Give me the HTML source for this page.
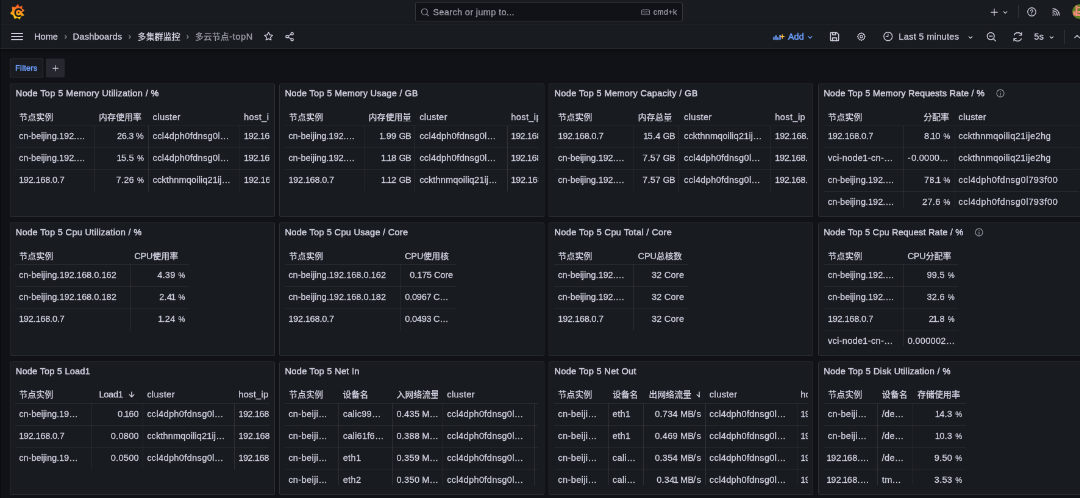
<!DOCTYPE html>
<html lang="zh"><head><meta charset="utf-8"><title>多云节点-topN - Dashboards - Grafana</title>
<style>
html,body{margin:0;padding:0;background:#111217;overflow:hidden}
body{width:1080px;height:498px;position:relative}
#root{position:absolute;left:0;top:0;width:1780px;height:820px;transform:scale(0.6096);transform-origin:0 0;
 font-family:'Liberation Sans','Noto Sans CJK SC',sans-serif;font-size:14.6px;color:rgb(204,204,220);overflow:hidden;will-change:transform}
.bar{position:absolute;left:0;width:1780px;height:39px;background:#181b1f;border-bottom:1px solid rgba(204,204,220,0.12);display:block}
.t{position:absolute;white-space:nowrap;line-height:20px;height:20px;-webkit-text-stroke:0.38px currentColor}
.c{letter-spacing:0;font-weight:500;-webkit-text-stroke:0.2px currentColor}
.ic{position:absolute;overflow:visible}
.ln{position:absolute;background:rgba(204,204,220,0.12)}
.vdiv{position:absolute;width:1px;background:rgba(204,204,220,0.16)}
.search{position:absolute;background:#111217;border:1px solid rgba(204,204,220,0.2);border-radius:3px}
.flt{position:absolute;background:#181b1f;border:1px solid rgba(204,204,220,0.16);border-radius:3px}
.plusb{position:absolute;background:rgba(204,204,220,0.12);border-radius:3px}
.panel{position:absolute;display:block;width:432.4px;height:217.2px;background:#181b1f;border:1px solid rgba(204,204,220,0.12);border-radius:3px}
.clip{position:absolute;overflow:hidden}
</style></head>
<body><div id="root">
<header class="bar" style="top:0"></header><nav class="bar" style="top:40px;border-bottom-color:rgba(204,204,220,0.07);box-shadow:0 3px 6px rgba(0,0,0,0.35)"></nav>
<svg class="ic" style="left:16.50px;top:7.05px" width="23.38" height="24.61" viewBox="0 0 100 100" preserveAspectRatio="none">
<defs><linearGradient id="gg" x1="0.35" y1="1" x2="0.5" y2="0"><stop offset="0" stop-color="#fcd20a"/><stop offset="0.5" stop-color="#f7941e"/><stop offset="1" stop-color="#ef4e28"/></linearGradient></defs>
<path fill="url(#gg)" stroke="url(#gg)" stroke-width="2" stroke-linejoin="round" d="M52.5 -1.0 L63.1 17.4 L83.0 11.0 L81.1 31.9 L100.0 39.0 L79.9 54.5 L97.0 73.0 L74.8 79.4 L66.0 100.0 L48.2 89.0 L30.0 97.0 L20.9 74.8 L-1.0 61.0 L14.4 41.8 L11.0 17.0 L35.7 17.9 Z"/>
<path fill="none" stroke="#181b1f" stroke-width="11.500" stroke-linecap="round" d="M76.4 39.8 A24.5 24.5 0 1 0 71.7 75.6"/>
<circle cx="57.6" cy="55.5" r="5" fill="#181b1f"/>
</svg>
<div class="search" style="left:681.27px;top:3.61px;width:436.32px;height:29.66px"></div>
<svg class="ic" style="left:689.18px;top:11.52px" width="16" height="16" viewBox="0 0 24 24" fill="none" stroke="rgba(204,204,220,0.65)" stroke-width="2" stroke-linecap="round" stroke-linejoin="round" ><circle cx="11" cy="11" r="7.5"/><path d="M16.500 16.500L21 21"/></svg>
<svg class="ic" style="left:1051.06px;top:11.52px" width="16" height="16" viewBox="0 0 24 24" fill="none" stroke="rgba(204,204,220,0.65)" stroke-width="1.8" stroke-linecap="round" stroke-linejoin="round" ><rect x="2.500" y="6" width="19" height="12" rx="2"/><path d="M6 10h1M10 10h1M14 10h1M18 10h.5M7 14h10" stroke-width="1.600"/></svg>
<svg class="ic" style="left:1622.23px;top:10.52px" width="18" height="18" viewBox="0 0 24 24" fill="none" stroke="rgb(204,204,220)" stroke-width="1.7" stroke-linecap="round" stroke-linejoin="round" ><path d="M12 5v14M5 12h14"/></svg>
<svg class="ic" style="left:1641.95px;top:13.01px" width="14" height="14" viewBox="0 0 24 24" fill="none" stroke="rgb(204,204,220)" stroke-width="2.2" stroke-linecap="round" stroke-linejoin="round" ><path d="M7 10l5 5 5-5"/></svg>
<div class="vdiv" style="left:1670.10px;top:7.55px;height:22.31px"></div>
<svg class="ic" style="left:1683.92px;top:11.02px" width="17" height="17" viewBox="0 0 24 24" fill="none" stroke="rgb(204,204,220)" stroke-width="1.9" stroke-linecap="round" stroke-linejoin="round" ><circle cx="12" cy="12" r="9.500"/><path d="M9.500 9.500a2.600 2.600 0 1 1 3.600 2.400c-.8.4-1.100.9-1.100 1.800M12 17v.3"/></svg>
<svg class="ic" style="left:1723.63px;top:11.52px" width="16" height="16" viewBox="0 0 24 24" fill="none" stroke="rgb(204,204,220)" stroke-width="2.3" stroke-linecap="round" stroke-linejoin="round" ><path d="M4.500 13.500a6 6 0 0 1 6 6M4.500 8.500a11 11 0 0 1 11 11M4.500 3.500a16 16 0 0 1 16 16" /><circle cx="5.200" cy="19" r="1.700" fill="rgb(204,204,220)" stroke="none"/></svg>
<svg class="ic" style="left:1758.53px;top:7.38px" width="23.95" height="23.95" viewBox="0 0 24 24">
<defs><clipPath id="av"><circle cx="12" cy="12" r="12"/></clipPath></defs>
<g clip-path="url(#av)"><rect width="24" height="24" fill="#5f7d22"/><rect x="1.500" y="11.500" width="4" height="7" fill="#f28b7d"/><rect x="5.500" y="2" width="3" height="17" fill="#f28b7d"/><rect x="8.500" y="4" width="6" height="2.500" fill="#f28b7d"/><rect x="8.500" y="11" width="6" height="3" fill="#f28b7d"/><rect x="5.500" y="16" width="9" height="3" fill="#f28b7d"/></g></svg>
<div style="position:absolute;left:18.21px;top:53.79px;width:19.52px;height:2px;border-radius:1px;background:rgb(204,204,220)"></div>
<div style="position:absolute;left:18.21px;top:58.96px;width:19.52px;height:2px;border-radius:1px;background:rgb(204,204,220)"></div>
<div style="position:absolute;left:18.21px;top:64.21px;width:19.52px;height:2px;border-radius:1px;background:rgb(204,204,220)"></div>
<svg class="ic" style="left:100.62px;top:53.70px" width="13" height="13" viewBox="0 0 24 24" fill="none" stroke="rgba(204,204,220,0.65)" stroke-width="2.2" stroke-linecap="round" stroke-linejoin="round" ><path d="M10 7l5 5-5 5"/></svg>
<svg class="ic" style="left:205.93px;top:53.70px" width="13" height="13" viewBox="0 0 24 24" fill="none" stroke="rgba(204,204,220,0.65)" stroke-width="2.2" stroke-linecap="round" stroke-linejoin="round" ><path d="M10 7l5 5-5 5"/></svg>
<svg class="ic" style="left:301.24px;top:53.70px" width="13" height="13" viewBox="0 0 24 24" fill="none" stroke="rgba(204,204,220,0.65)" stroke-width="2.2" stroke-linecap="round" stroke-linejoin="round" ><path d="M10 7l5 5-5 5"/></svg>
<svg class="ic" style="left:431.28px;top:50.05px" width="19" height="19" viewBox="0 0 24 24" fill="none" stroke="rgb(204,204,220)" stroke-width="2" stroke-linecap="round" stroke-linejoin="round" ><path d="M12 3.600l2.600 5.400 5.900.8-4.300 4.100 1.050 5.900L12 17l-5.250 2.800 1.050-5.900-4.300-4.100 5.900-.8z"/></svg>
<svg class="ic" style="left:465.74px;top:50.88px" width="18" height="18" viewBox="0 0 24 24" fill="none" stroke="rgb(204,204,220)" stroke-width="2" stroke-linecap="round" stroke-linejoin="round" ><circle cx="17.500" cy="5.500" r="2.600"/><circle cx="6.500" cy="12" r="2.600"/><circle cx="17.500" cy="18.500" r="2.600"/><path d="M8.800 10.700l6.400-3.800M8.800 13.300l6.400 3.800"/></svg>
<svg class="ic" style="left:1266.74px;top:50.04px" width="20" height="20" viewBox="0 0 24 24" fill="none" stroke="#6e9fff" stroke-width="2.6" stroke-linecap="round" stroke-linejoin="round" ><path d="M3 18.500v-6M7 18.500v-9M11 18.500v-5M15 18.500V8.500" stroke-width="2.800" stroke-linecap="butt"/><path d="M19.500 8.500v7M16 12h7" stroke="#f5b73d" stroke-width="2.200"/></svg>
<svg class="ic" style="left:1322.40px;top:53.53px" width="14" height="14" viewBox="0 0 24 24" fill="none" stroke="#6e9fff" stroke-width="2.4" stroke-linecap="round" stroke-linejoin="round" ><path d="M7 10l5 5 5-5"/></svg>
<svg class="ic" style="left:1358.77px;top:50.04px" width="20" height="20" viewBox="0 0 24 24" fill="none" stroke="rgb(204,204,220)" stroke-width="2" stroke-linecap="round" stroke-linejoin="round" ><path d="M4 5.500A1.500 1.500 0 0 1 5.500 4H16l4 4v10.500a1.500 1.500 0 0 1-1.500 1.500h-13A1.500 1.500 0 0 1 4 18.500z"/><path d="M8 4v4.500h6V4M8 20v-5.500h8V20"/></svg>
<svg class="ic" style="left:1404.89px;top:52.04px" width="16" height="16" viewBox="0 0 24 24" fill="none" stroke="rgb(204,204,220)" stroke-width="1.9" stroke-linecap="round" stroke-linejoin="round" ><circle cx="12" cy="12" r="3.200"/><path d="M12 2.800l1.700 2.300 2.800-.7.900 2.700 2.800.9-.7 2.800 2.300 1.700-2.300 1.700.7 2.800-2.800.9-.9 2.700-2.800-.7-1.700 2.300-1.700-2.300-2.800.7-.9-2.700-2.800-.9.700-2.800L2.200 12.500l2.300-1.700-.7-2.800 2.800-.9.900-2.700 2.800.7z" transform="translate(-0.200,-0.300)"/></svg>
<svg class="ic" style="left:1447.94px;top:51.29px" width="17.5" height="17.5" viewBox="0 0 24 24" fill="none" stroke="rgb(204,204,220)" stroke-width="2" stroke-linecap="round" stroke-linejoin="round" ><circle cx="12" cy="12" r="9.500"/><path d="M12 6.500V12H7.500"/></svg>
<svg class="ic" style="left:1584.86px;top:53.53px" width="14" height="14" viewBox="0 0 24 24" fill="none" stroke="rgb(204,204,220)" stroke-width="2.2" stroke-linecap="round" stroke-linejoin="round" ><path d="M7 10l5 5 5-5"/></svg>
<svg class="ic" style="left:1617.31px;top:51.04px" width="18" height="18" viewBox="0 0 24 24" fill="none" stroke="rgb(204,204,220)" stroke-width="2" stroke-linecap="round" stroke-linejoin="round" ><circle cx="11" cy="11" r="7.800"/><path d="M17 17l4.500 4.500M7.500 11h7"/></svg>
<svg class="ic" style="left:1660.45px;top:50.54px" width="19" height="19" viewBox="0 0 24 24" fill="none" stroke="rgb(204,204,220)" stroke-width="2" stroke-linecap="round" stroke-linejoin="round" ><path d="M20 8.500A8.500 8.500 0 0 0 4.600 8M20 3.500v5h-5M4 15.500A8.500 8.500 0 0 0 19.400 16M4 20.500v-5h5"/></svg>
<svg class="ic" style="left:1718.07px;top:53.53px" width="14" height="14" viewBox="0 0 24 24" fill="none" stroke="rgb(204,204,220)" stroke-width="2.2" stroke-linecap="round" stroke-linejoin="round" ><path d="M7 10l5 5 5-5"/></svg>
<div class="vdiv" style="left:1745.89px;top:48.88px;height:22.64px"></div>
<svg class="ic" style="left:1758.73px;top:51.71px" width="16" height="16" viewBox="0 0 24 24" fill="none" stroke="rgb(204,204,220)" stroke-width="2.4" stroke-linecap="round" stroke-linejoin="round" ><path d="M6 15l6-6 6 6"/></svg>
<div class="flt" style="left:16.24px;top:95.64px;width:52.30px;height:29.82px"></div>
<div class="plusb" style="left:74.80px;top:95.64px;width:31.66px;height:31.82px"></div>
<svg class="ic" style="left:82.63px;top:103.55px" width="16" height="16" viewBox="0 0 24 24" fill="none" stroke="rgb(204,204,220)" stroke-width="1.9" stroke-linecap="round" stroke-linejoin="round" ><path d="M12 5.500v13M5.500 12h13"/></svg>
<span class="t" style="top:49.96px;left:56.10px;letter-spacing:-0.015px;">Home</span>
<span class="t" style="top:49.96px;left:119.59px;letter-spacing:0.201px;">Dashboards</span>
<span class="t" style="top:49.96px;left:225.72px;"><span class="c" style="font-size:14.00px">多集群监控</span></span>
<span class="t" style="top:49.96px;left:319.88px;letter-spacing:0.691px;color:rgba(204,204,220,0.65);"><span class="c" style="font-size:14.00px">多云节点</span>-topN</span>
<span class="t" style="top:9.52px;left:710.30px;letter-spacing:0.315px;color:rgba(204,204,220,0.65);">Search or jump to...</span>
<span class="t" style="top:9.52px;left:1071.69px;letter-spacing:0.360px;font-size:12.5px;color:rgba(204,204,220,0.65);">cmd+k</span>
<span class="t" style="top:49.96px;left:1292.81px;letter-spacing:0.038px;color:#6e9fff;-webkit-text-stroke:0.6px currentColor;">Add</span>
<span class="t" style="top:49.96px;left:1474.25px;letter-spacing:0.297px;">Last 5 minutes</span>
<span class="t" style="top:49.96px;left:1696.19px;letter-spacing:0.409px;">5s</span>
<span class="t" style="top:101.55px;left:25.10px;letter-spacing:0.279px;font-size:12.6px;color:#6e9fff;-webkit-text-stroke:0.55px currentColor;">Filters</span>
<main>
<section class="panel" style="left:16.40px;top:136.73px"><span class="t" style="top:5.01px;left:8.37px;letter-spacing:0.347px;-webkit-text-stroke:0.6px currentColor;">Node Top 5 Memory Utilization / %</span><div class="clip" style="left:7.30px;top:-1px;width:416.90px;height:203.25px"><div class="ln" style="left:0.00px;top:68.81px;width:656.17px;height:1px"></div><div class="ln" style="left:0.00px;top:104.81px;width:656.17px;height:1px"></div><div class="ln" style="left:0.00px;top:140.81px;width:656.17px;height:1px"></div><div class="ln" style="left:129.32px;top:69.31px;width:1px;height:108.00px"></div><div class="ln" style="left:218.07px;top:69.31px;width:1px;height:108.00px"></div><div class="ln" style="left:368.66px;top:69.31px;width:1px;height:108.00px"></div><span class="t" style="top:44.87px;left:6.46px;"><span class="c" style="font-size:14.00px">节点实例</span></span>
<span class="t" style="top:44.87px;left:137.29px;"><span class="c" style="font-size:14.00px">内存使用率</span></span>
<span class="t" style="top:44.87px;left:225.87px;letter-spacing:0.398px;">cluster</span>
<span class="t" style="top:44.87px;left:375.39px;letter-spacing:0.386px;">host_ip</span>
<span class="t" style="top:76.57px;left:6.22px;letter-spacing:-0.038px;">cn-beijing.192.…</span>
<span class="t" style="top:76.57px;left:167.31px;letter-spacing:-0.328px;">26.3 %</span>
<span class="t" style="top:76.57px;left:225.87px;letter-spacing:0.338px;">ccl4dph0fdnsg0l…</span>
<span class="t" style="top:76.57px;left:375.39px;letter-spacing:-0.453px;">192.168.0.162</span>
<span class="t" style="top:112.57px;left:6.22px;letter-spacing:-0.038px;">cn-beijing.192.…</span>
<span class="t" style="top:112.57px;left:166.90px"><span style="letter-spacing:-0.82px">1</span><span style="letter-spacing:0.28px">5</span><span style="letter-spacing:0.24px">.</span><span style="letter-spacing:0.28px">5</span><span style="letter-spacing:0.84px"> </span><span style="letter-spacing:-1.93px;font-size:12.4px">%</span></span>
<span class="t" style="top:112.57px;left:225.87px;letter-spacing:0.338px;">ccl4dph0fdnsg0l…</span>
<span class="t" style="top:112.57px;left:375.39px;letter-spacing:-0.453px;">192.168.0.182</span>
<span class="t" style="top:148.57px;left:6.22px;letter-spacing:-0.225px;">192.168.0.7</span>
<span class="t" style="top:148.57px;left:165.81px"><span style="letter-spacing:0.28px">7</span><span style="letter-spacing:0.24px">.</span><span style="letter-spacing:0.28px">26</span><span style="letter-spacing:0.84px"> </span><span style="letter-spacing:-1.93px;font-size:12.4px">%</span></span>
<span class="t" style="top:148.57px;left:225.87px;letter-spacing:0.114px;">cckthnmqoiliq21ij…</span>
<span class="t" style="top:148.57px;left:375.39px;letter-spacing:-0.225px;">192.168.0.7</span></div></section>
<section class="panel" style="left:458.17px;top:136.73px"><span class="t" style="top:5.01px;left:8.37px;letter-spacing:0.269px;-webkit-text-stroke:0.6px currentColor;">Node Top 5 Memory Usage / GB</span><div class="clip" style="left:7.53px;top:-1px;width:416.50px;height:203.25px"><div class="ln" style="left:0.00px;top:68.81px;width:656.17px;height:1px"></div><div class="ln" style="left:0.00px;top:104.81px;width:656.17px;height:1px"></div><div class="ln" style="left:0.00px;top:140.81px;width:656.17px;height:1px"></div><div class="ln" style="left:131.55px;top:69.31px;width:1px;height:108.00px"></div><div class="ln" style="left:213.57px;top:69.31px;width:1px;height:108.00px"></div><div class="ln" style="left:365.31px;top:69.31px;width:1px;height:108.00px"></div><span class="t" style="top:44.87px;left:7.38px;"><span class="c" style="font-size:14.00px">节点实例</span></span>
<span class="t" style="top:44.87px;left:137.80px;"><span class="c" style="font-size:14.00px">内存使用量</span></span>
<span class="t" style="top:44.87px;left:221.46px;letter-spacing:0.398px;">cluster</span>
<span class="t" style="top:44.87px;left:371.56px;letter-spacing:0.386px;">host_ip</span>
<span class="t" style="top:76.57px;left:6.56px;letter-spacing:-0.038px;">cn-beijing.192.…</span>
<span class="t" style="top:76.57px;left:155.41px"><span style="letter-spacing:-0.82px">1</span><span style="letter-spacing:0.24px">.</span><span style="letter-spacing:0.28px">99</span><span style="letter-spacing:-0.16px"> </span><span style="letter-spacing:-0.76px">G</span><span style="letter-spacing:-0.54px">B</span></span>
<span class="t" style="top:76.57px;left:221.46px;letter-spacing:0.338px;">ccl4dph0fdnsg0l…</span>
<span class="t" style="top:76.57px;left:371.56px;letter-spacing:-0.453px;">192.168.0.162</span>
<span class="t" style="top:112.57px;left:6.56px;letter-spacing:-0.038px;">cn-beijing.192.…</span>
<span class="t" style="top:112.57px;left:158.41px"><span style="letter-spacing:-0.82px">1</span><span style="letter-spacing:-1.66px">.</span><span style="letter-spacing:-0.82px">1</span><span style="letter-spacing:0.28px">8</span><span style="letter-spacing:-0.16px"> </span><span style="letter-spacing:-0.76px">G</span><span style="letter-spacing:-0.54px">B</span></span>
<span class="t" style="top:112.57px;left:221.46px;letter-spacing:0.338px;">ccl4dph0fdnsg0l…</span>
<span class="t" style="top:112.57px;left:371.56px;letter-spacing:-0.453px;">192.168.0.182</span>
<span class="t" style="top:148.57px;left:6.56px;letter-spacing:-0.225px;">192.168.0.7</span>
<span class="t" style="top:148.57px;left:158.41px"><span style="letter-spacing:-0.82px">1</span><span style="letter-spacing:-1.66px">.</span><span style="letter-spacing:-0.82px">1</span><span style="letter-spacing:0.28px">2</span><span style="letter-spacing:-0.16px"> </span><span style="letter-spacing:-0.76px">G</span><span style="letter-spacing:-0.54px">B</span></span>
<span class="t" style="top:148.57px;left:221.46px;letter-spacing:0.114px;">cckthnmqoiliq21ij…</span>
<span class="t" style="top:148.57px;left:371.56px;letter-spacing:-0.225px;">192.168.0.7</span></div></section>
<section class="panel" style="left:900.02px;top:136.73px"><span class="t" style="top:5.01px;left:8.37px;letter-spacing:0.328px;-webkit-text-stroke:0.6px currentColor;">Node Top 5 Memory Capacity / GB</span><div class="clip" style="left:7.94px;top:-1px;width:415.68px;height:203.25px"><div class="ln" style="left:0.00px;top:68.81px;width:656.17px;height:1px"></div><div class="ln" style="left:0.00px;top:104.81px;width:656.17px;height:1px"></div><div class="ln" style="left:0.00px;top:140.81px;width:656.17px;height:1px"></div><div class="ln" style="left:128.93px;top:69.31px;width:1px;height:108.00px"></div><div class="ln" style="left:204.39px;top:69.31px;width:1px;height:108.00px"></div><div class="ln" style="left:355.31px;top:69.31px;width:1px;height:108.00px"></div><span class="t" style="top:44.87px;left:6.40px;"><span class="c" style="font-size:14.00px">节点实例</span></span>
<span class="t" style="top:44.87px;left:137.63px;"><span class="c" style="font-size:14.00px">内存总量</span></span>
<span class="t" style="top:44.87px;left:213.09px;letter-spacing:0.398px;">cluster</span>
<span class="t" style="top:44.87px;left:362.37px;letter-spacing:0.386px;">host_ip</span>
<span class="t" style="top:76.57px;left:6.40px;letter-spacing:-0.225px;">192.168.0.7</span>
<span class="t" style="top:76.57px;left:146.22px"><span style="letter-spacing:-0.82px">1</span><span style="letter-spacing:0.28px">5</span><span style="letter-spacing:0.24px">.</span><span style="letter-spacing:0.28px">4</span><span style="letter-spacing:-0.16px"> </span><span style="letter-spacing:-0.76px">G</span><span style="letter-spacing:-0.54px">B</span></span>
<span class="t" style="top:76.57px;left:213.09px;letter-spacing:0.114px;">cckthnmqoiliq21ij…</span>
<span class="t" style="top:76.57px;left:362.37px;letter-spacing:-0.225px;">192.168.0.7</span>
<span class="t" style="top:112.57px;left:6.40px;letter-spacing:-0.038px;">cn-beijing.192.…</span>
<span class="t" style="top:112.57px;left:145.13px"><span style="letter-spacing:0.28px">7</span><span style="letter-spacing:0.24px">.</span><span style="letter-spacing:0.28px">57</span><span style="letter-spacing:-0.16px"> </span><span style="letter-spacing:-0.76px">G</span><span style="letter-spacing:-0.54px">B</span></span>
<span class="t" style="top:112.57px;left:213.09px;letter-spacing:0.338px;">ccl4dph0fdnsg0l…</span>
<span class="t" style="top:112.57px;left:362.37px;letter-spacing:-0.453px;">192.168.0.162</span>
<span class="t" style="top:148.57px;left:6.40px;letter-spacing:-0.038px;">cn-beijing.192.…</span>
<span class="t" style="top:148.57px;left:145.13px"><span style="letter-spacing:0.28px">7</span><span style="letter-spacing:0.24px">.</span><span style="letter-spacing:0.28px">57</span><span style="letter-spacing:-0.16px"> </span><span style="letter-spacing:-0.76px">G</span><span style="letter-spacing:-0.54px">B</span></span>
<span class="t" style="top:148.57px;left:213.09px;letter-spacing:0.338px;">ccl4dph0fdnsg0l…</span>
<span class="t" style="top:148.57px;left:362.37px;letter-spacing:-0.453px;">192.168.0.182</span></div></section>
<section class="panel" style="left:1341.78px;top:136.73px"><span class="t" style="top:5.01px;left:8.37px;letter-spacing:0.207px;-webkit-text-stroke:0.6px currentColor;">Node Top 5 Memory Requests Rate / %</span><svg class="ic" style="left:290.62px;top:7.57px" width="16" height="16" viewBox="0 0 24 24" fill="none" stroke="rgba(204,204,220,0.65)" stroke-width="2"><circle cx="12" cy="12" r="9"/><path d="M12 11v6M12 7.2v1.2" stroke-linecap="round"/></svg><div class="clip" style="left:8.92px;top:-1px;width:418.31px;height:203.25px"><div class="ln" style="left:0.00px;top:68.81px;width:656.17px;height:1px"></div><div class="ln" style="left:0.00px;top:104.81px;width:656.17px;height:1px"></div><div class="ln" style="left:0.00px;top:140.81px;width:656.17px;height:1px"></div><div class="ln" style="left:0.00px;top:176.80px;width:656.17px;height:1px"></div><div class="ln" style="left:130.73px;top:69.31px;width:1px;height:144.00px"></div><div class="ln" style="left:214.72px;top:69.31px;width:1px;height:144.00px"></div><span class="t" style="top:44.87px;left:6.56px;"><span class="c" style="font-size:14.00px">节点实例</span></span>
<span class="t" style="top:44.87px;left:163.22px;"><span class="c" style="font-size:14.00px">分配率</span></span>
<span class="t" style="top:44.87px;left:220.64px;letter-spacing:0.398px;">cluster</span>
<span class="t" style="top:76.57px;left:6.23px;letter-spacing:-0.225px;">192.168.0.7</span>
<span class="t" style="top:76.57px;left:164.39px"><span style="letter-spacing:0.28px">8</span><span style="letter-spacing:-1.66px">.</span><span style="letter-spacing:-0.82px">1</span><span style="letter-spacing:0.28px">0</span><span style="letter-spacing:0.84px"> </span><span style="letter-spacing:-1.93px;font-size:12.4px">%</span></span>
<span class="t" style="top:76.57px;left:220.64px;letter-spacing:0.386px;">cckthnmqoiliq21ije2hg</span>
<span class="t" style="top:112.57px;left:6.23px;letter-spacing:0.289px;">vci-node1-cn-…</span>
<span class="t" style="top:112.57px;left:136.98px"><span style="letter-spacing:1.44px">-</span><span style="letter-spacing:0.28px">0</span><span style="letter-spacing:0.24px">.</span><span style="letter-spacing:0.28px">0000</span><span style="letter-spacing:-2.40px">…</span></span>
<span class="t" style="top:112.57px;left:220.64px;letter-spacing:0.386px;">cckthnmqoiliq21ije2hg</span>
<span class="t" style="top:148.57px;left:6.23px;letter-spacing:-0.038px;">cn-beijing.192.…</span>
<span class="t" style="top:148.57px;left:164.39px"><span style="letter-spacing:0.28px">78</span><span style="letter-spacing:-1.66px">.</span><span style="letter-spacing:-0.82px">1</span><span style="letter-spacing:0.84px"> </span><span style="letter-spacing:-1.93px;font-size:12.4px">%</span></span>
<span class="t" style="top:148.57px;left:220.64px;letter-spacing:0.624px;">ccl4dph0fdnsg0l793f00</span>
<span class="t" style="top:184.57px;left:6.23px;letter-spacing:-0.038px;">cn-beijing.192.…</span>
<span class="t" style="top:184.57px;left:161.39px"><span style="letter-spacing:0.28px">27</span><span style="letter-spacing:0.24px">.</span><span style="letter-spacing:0.28px">6</span><span style="letter-spacing:0.84px"> </span><span style="letter-spacing:-1.93px;font-size:12.4px">%</span></span>
<span class="t" style="top:184.57px;left:220.64px;letter-spacing:0.624px;">ccl4dph0fdnsg0l793f00</span></div></section>
<section class="panel" style="left:16.40px;top:364.70px"><span class="t" style="top:5.01px;left:8.37px;letter-spacing:0.301px;-webkit-text-stroke:0.6px currentColor;">Node Top 5 Cpu Utilization / %</span><div class="clip" style="left:7.30px;top:-1px;width:416.90px;height:203.25px"><div class="ln" style="left:0.00px;top:68.81px;width:285.33px;height:1px"></div><div class="ln" style="left:0.00px;top:104.81px;width:285.33px;height:1px"></div><div class="ln" style="left:0.00px;top:140.81px;width:285.33px;height:1px"></div><div class="ln" style="left:188.87px;top:69.31px;width:1px;height:108.00px"></div><span class="t" style="top:44.87px;left:6.46px;"><span class="c" style="font-size:14.00px">节点实例</span></span>
<span class="t" style="top:44.87px;left:195.52px;letter-spacing:-0.266px;">CPU<span class="c" style="font-size:14.00px">使用率</span></span>
<span class="t" style="top:76.57px;left:6.22px;">cn-beijing.192.168.0.162</span>
<span class="t" style="top:76.57px;left:233.47px"><span style="letter-spacing:0.28px">4</span><span style="letter-spacing:0.24px">.</span><span style="letter-spacing:0.28px">39</span><span style="letter-spacing:0.84px"> </span><span style="letter-spacing:-1.93px;font-size:12.4px">%</span></span>
<span class="t" style="top:112.57px;left:6.22px;">cn-beijing.192.168.0.182</span>
<span class="t" style="top:112.57px;left:236.47px"><span style="letter-spacing:0.28px">2</span><span style="letter-spacing:0.24px">.</span><span style="letter-spacing:-1.62px">4</span><span style="letter-spacing:-0.82px">1</span><span style="letter-spacing:0.84px"> </span><span style="letter-spacing:-1.93px;font-size:12.4px">%</span></span>
<span class="t" style="top:148.57px;left:6.22px;letter-spacing:-0.225px;">192.168.0.7</span>
<span class="t" style="top:148.57px;left:234.57px"><span style="letter-spacing:-0.82px">1</span><span style="letter-spacing:0.24px">.</span><span style="letter-spacing:0.28px">24</span><span style="letter-spacing:0.84px"> </span><span style="letter-spacing:-1.93px;font-size:12.4px">%</span></span></div></section>
<section class="panel" style="left:458.17px;top:364.70px"><span class="t" style="top:5.01px;left:8.37px;letter-spacing:0.242px;-webkit-text-stroke:0.6px currentColor;">Node Top 5 Cpu Usage / Core</span><div class="clip" style="left:7.53px;top:-1px;width:416.50px;height:203.25px"><div class="ln" style="left:0.00px;top:68.81px;width:282.15px;height:1px"></div><div class="ln" style="left:0.00px;top:104.81px;width:282.15px;height:1px"></div><div class="ln" style="left:0.00px;top:140.81px;width:282.15px;height:1px"></div><div class="ln" style="left:190.61px;top:69.31px;width:1px;height:108.00px"></div><span class="t" style="top:44.87px;left:7.38px;"><span class="c" style="font-size:14.00px">节点实例</span></span>
<span class="t" style="top:44.87px;left:197.26px;letter-spacing:-0.157px;">CPU<span class="c" style="font-size:14.00px">使用核</span></span>
<span class="t" style="top:76.57px;left:6.56px;">cn-beijing.192.168.0.162</span>
<span class="t" style="top:76.57px;left:205.70px;letter-spacing:-0.168px;">0.175 Core</span>
<span class="t" style="top:112.57px;left:6.56px;">cn-beijing.192.168.0.182</span>
<span class="t" style="top:112.57px;left:197.67px;letter-spacing:-0.274px;">0.0967 C…</span>
<span class="t" style="top:148.57px;left:6.56px;letter-spacing:-0.225px;">192.168.0.7</span>
<span class="t" style="top:148.57px;left:197.67px;letter-spacing:-0.274px;">0.0493 C…</span></div></section>
<section class="panel" style="left:900.02px;top:364.70px"><span class="t" style="top:5.01px;left:8.37px;letter-spacing:0.338px;-webkit-text-stroke:0.6px currentColor;">Node Top 5 Cpu Total / Core</span><div class="clip" style="left:7.94px;top:-1px;width:415.68px;height:203.25px"><div class="ln" style="left:0.00px;top:68.81px;width:219.65px;height:1px"></div><div class="ln" style="left:0.00px;top:104.81px;width:219.65px;height:1px"></div><div class="ln" style="left:0.00px;top:140.81px;width:219.65px;height:1px"></div><div class="ln" style="left:129.75px;top:69.31px;width:1px;height:108.00px"></div><span class="t" style="top:44.87px;left:6.40px;"><span class="c" style="font-size:14.00px">节点实例</span></span>
<span class="t" style="top:44.87px;left:137.63px;letter-spacing:-0.211px;">CPU<span class="c" style="font-size:14.00px">总核数</span></span>
<span class="t" style="top:76.57px;left:6.40px;letter-spacing:-0.038px;">cn-beijing.192.…</span>
<span class="t" style="top:76.57px;left:159.98px;letter-spacing:0.199px;">32 Core</span>
<span class="t" style="top:112.57px;left:6.40px;letter-spacing:-0.038px;">cn-beijing.192.…</span>
<span class="t" style="top:112.57px;left:159.98px;letter-spacing:0.199px;">32 Core</span>
<span class="t" style="top:148.57px;left:6.40px;letter-spacing:-0.225px;">192.168.0.7</span>
<span class="t" style="top:148.57px;left:159.98px;letter-spacing:0.199px;">32 Core</span></div></section>
<section class="panel" style="left:1341.78px;top:364.70px"><span class="t" style="top:5.01px;left:8.37px;letter-spacing:0.178px;-webkit-text-stroke:0.6px currentColor;">Node Top 5 Cpu Request Rate / %</span><svg class="ic" style="left:255.19px;top:7.57px" width="16" height="16" viewBox="0 0 24 24" fill="none" stroke="rgba(204,204,220,0.65)" stroke-width="2"><circle cx="12" cy="12" r="9"/><path d="M12 11v6M12 7.2v1.2" stroke-linecap="round"/></svg><div class="clip" style="left:8.92px;top:-1px;width:418.31px;height:203.25px"><div class="ln" style="left:0.00px;top:68.81px;width:220.64px;height:1px"></div><div class="ln" style="left:0.00px;top:104.81px;width:220.64px;height:1px"></div><div class="ln" style="left:0.00px;top:140.81px;width:220.64px;height:1px"></div><div class="ln" style="left:0.00px;top:176.80px;width:220.64px;height:1px"></div><div class="ln" style="left:129.91px;top:69.31px;width:1px;height:144.00px"></div><span class="t" style="top:44.87px;left:6.56px;"><span class="c" style="font-size:14.00px">节点实例</span></span>
<span class="t" style="top:44.87px;left:136.98px;letter-spacing:-0.321px;">CPU<span class="c" style="font-size:14.00px">分配率</span></span>
<span class="t" style="top:76.57px;left:6.23px;letter-spacing:-0.038px;">cn-beijing.192.…</span>
<span class="t" style="top:76.57px;left:168.77px"><span style="letter-spacing:0.28px">99</span><span style="letter-spacing:0.24px">.</span><span style="letter-spacing:0.28px">5</span><span style="letter-spacing:0.84px"> </span><span style="letter-spacing:-1.93px;font-size:12.4px">%</span></span>
<span class="t" style="top:112.57px;left:6.23px;letter-spacing:-0.038px;">cn-beijing.192.…</span>
<span class="t" style="top:112.57px;left:168.77px"><span style="letter-spacing:0.28px">32</span><span style="letter-spacing:0.24px">.</span><span style="letter-spacing:0.28px">6</span><span style="letter-spacing:0.84px"> </span><span style="letter-spacing:-1.93px;font-size:12.4px">%</span></span>
<span class="t" style="top:148.57px;left:6.23px;letter-spacing:-0.225px;">192.168.0.7</span>
<span class="t" style="top:148.57px;left:171.77px"><span style="letter-spacing:-1.62px">2</span><span style="letter-spacing:-0.82px">1</span><span style="letter-spacing:0.24px">.</span><span style="letter-spacing:0.28px">8</span><span style="letter-spacing:0.84px"> </span><span style="letter-spacing:-1.93px;font-size:12.4px">%</span></span>
<span class="t" style="top:184.57px;left:6.23px;letter-spacing:0.289px;">vci-node1-cn-…</span>
<span class="t" style="top:184.57px;left:136.98px"><span style="letter-spacing:0.28px">0</span><span style="letter-spacing:0.24px">.</span><span style="letter-spacing:0.28px">000002</span><span style="letter-spacing:-2.40px">…</span></span></div></section>
<section class="panel" style="left:16.40px;top:592.55px"><span class="t" style="top:5.01px;left:8.37px;letter-spacing:0.200px;-webkit-text-stroke:0.6px currentColor;">Node Top 5 Load1</span><div class="clip" style="left:7.30px;top:-1px;width:416.90px;height:203.25px"><div class="ln" style="left:0.00px;top:68.81px;width:656.17px;height:1px"></div><div class="ln" style="left:0.00px;top:104.81px;width:656.17px;height:1px"></div><div class="ln" style="left:0.00px;top:140.81px;width:656.17px;height:1px"></div><div class="ln" style="left:124.48px;top:69.31px;width:1px;height:108.00px"></div><div class="ln" style="left:209.79px;top:69.31px;width:1px;height:108.00px"></div><div class="ln" style="left:359.06px;top:69.31px;width:1px;height:108.00px"></div><span class="t" style="top:44.87px;left:6.46px;"><span class="c" style="font-size:14.00px">节点实例</span></span>
<span class="t" style="top:44.87px;left:137.70px;letter-spacing:-0.245px;">Load1</span>
<span class="t" style="top:44.87px;left:216.44px;letter-spacing:0.398px;">cluster</span>
<span class="t" style="top:44.87px;left:366.54px;letter-spacing:0.307px;">host_ip</span>
<span class="t" style="top:76.57px;left:6.63px;letter-spacing:-0.070px;">cn-beijing.19…</span>
<span class="t" style="top:76.57px;left:168.41px"><span style="letter-spacing:0.28px">0</span><span style="letter-spacing:-1.66px">.</span><span style="letter-spacing:-0.82px">1</span><span style="letter-spacing:0.28px">60</span></span>
<span class="t" style="top:76.57px;left:216.44px;letter-spacing:0.338px;">ccl4dph0fdnsg0l…</span>
<span class="t" style="top:76.57px;left:366.54px;letter-spacing:-0.453px;">192.168.0.162</span>
<span class="t" style="top:112.57px;left:6.22px;letter-spacing:-0.225px;">192.168.0.7</span>
<span class="t" style="top:112.57px;left:157.01px"><span style="letter-spacing:0.28px">0</span><span style="letter-spacing:0.24px">.</span><span style="letter-spacing:0.28px">0800</span></span>
<span class="t" style="top:112.57px;left:216.44px;letter-spacing:0.114px;">cckthnmqoiliq21ij…</span>
<span class="t" style="top:112.57px;left:366.54px;letter-spacing:-0.225px;">192.168.0.7</span>
<span class="t" style="top:148.57px;left:6.63px;letter-spacing:-0.070px;">cn-beijing.19…</span>
<span class="t" style="top:148.57px;left:157.01px"><span style="letter-spacing:0.28px">0</span><span style="letter-spacing:0.24px">.</span><span style="letter-spacing:0.28px">0500</span></span>
<span class="t" style="top:148.57px;left:216.44px;letter-spacing:0.338px;">ccl4dph0fdnsg0l…</span>
<span class="t" style="top:148.57px;left:366.54px;letter-spacing:-0.453px;">192.168.0.182</span><svg class="ic" style="left:184.01px;top:47.87px" width="14" height="14" viewBox="0 0 24 24" fill="none" stroke="rgb(204,204,220)" stroke-width="2.7" stroke-linecap="round" stroke-linejoin="round"><path d="M12 5v14M5.500 12.500L12 19l6.500-6.500"/></svg></div></section>
<section class="panel" style="left:458.17px;top:592.55px"><span class="t" style="top:5.01px;left:8.37px;letter-spacing:0.284px;-webkit-text-stroke:0.6px currentColor;">Node Top 5 Net In</span><div class="clip" style="left:7.53px;top:-1px;width:416.50px;height:203.25px"><div class="ln" style="left:0.00px;top:68.81px;width:656.17px;height:1px"></div><div class="ln" style="left:0.00px;top:104.81px;width:656.17px;height:1px"></div><div class="ln" style="left:0.00px;top:140.81px;width:656.17px;height:1px"></div><div class="ln" style="left:0.00px;top:176.80px;width:656.17px;height:1px"></div><div class="ln" style="left:88.08px;top:69.31px;width:1px;height:144.00px"></div><div class="ln" style="left:176.26px;top:69.31px;width:1px;height:144.00px"></div><div class="ln" style="left:259.10px;top:69.31px;width:1px;height:144.00px"></div><div class="ln" style="left:409.60px;top:69.31px;width:1px;height:144.00px"></div><span class="t" style="top:44.87px;left:7.38px;"><span class="c" style="font-size:14.00px">节点实例</span></span>
<span class="t" style="top:44.87px;left:95.55px;"><span class="c" style="font-size:14.00px">设备名</span></span>
<span class="t" style="top:44.87px;left:183.73px;width:67.26px;overflow:hidden;"><span class="c" style="font-size:14.00px">入网络流量</span></span>
<span class="t" style="top:44.87px;left:266.57px;letter-spacing:0.398px;">cluster</span>
<span class="t" style="top:76.57px;left:6.56px;letter-spacing:0.350px;">cn-beiji…</span>
<span class="t" style="top:76.57px;left:95.96px;letter-spacing:0.281px;">calic99…</span>
<span class="t" style="top:76.57px;left:183.73px"><span style="letter-spacing:0.28px">0</span><span style="letter-spacing:0.24px">.</span><span style="letter-spacing:0.28px">435</span><span style="letter-spacing:-0.16px"> </span><span style="letter-spacing:0.03px">M</span><span style="letter-spacing:-2.40px">…</span></span>
<span class="t" style="top:76.57px;left:266.57px;letter-spacing:0.338px;">ccl4dph0fdnsg0l…</span>
<span class="t" style="top:76.57px;left:416.67px;letter-spacing:-0.453px;">192.168.0.162</span>
<span class="t" style="top:112.57px;left:6.56px;letter-spacing:0.350px;">cn-beiji…</span>
<span class="t" style="top:112.57px;left:95.96px;letter-spacing:0.250px;">cali61f6…</span>
<span class="t" style="top:112.57px;left:183.73px"><span style="letter-spacing:0.28px">0</span><span style="letter-spacing:0.24px">.</span><span style="letter-spacing:0.28px">388</span><span style="letter-spacing:-0.16px"> </span><span style="letter-spacing:0.03px">M</span><span style="letter-spacing:-2.40px">…</span></span>
<span class="t" style="top:112.57px;left:266.57px;letter-spacing:0.338px;">ccl4dph0fdnsg0l…</span>
<span class="t" style="top:112.57px;left:416.67px;letter-spacing:-0.453px;">192.168.0.162</span>
<span class="t" style="top:148.57px;left:6.56px;letter-spacing:0.350px;">cn-beiji…</span>
<span class="t" style="top:148.57px;left:95.96px;letter-spacing:0.338px;">eth1</span>
<span class="t" style="top:148.57px;left:183.73px"><span style="letter-spacing:0.28px">0</span><span style="letter-spacing:0.24px">.</span><span style="letter-spacing:0.28px">359</span><span style="letter-spacing:-0.16px"> </span><span style="letter-spacing:0.03px">M</span><span style="letter-spacing:-2.40px">…</span></span>
<span class="t" style="top:148.57px;left:266.57px;letter-spacing:0.338px;">ccl4dph0fdnsg0l…</span>
<span class="t" style="top:148.57px;left:416.67px;letter-spacing:-0.453px;">192.168.0.162</span>
<span class="t" style="top:184.57px;left:6.56px;letter-spacing:0.350px;">cn-beiji…</span>
<span class="t" style="top:184.57px;left:95.96px;letter-spacing:0.338px;">eth2</span>
<span class="t" style="top:184.57px;left:183.73px"><span style="letter-spacing:0.28px">0</span><span style="letter-spacing:0.24px">.</span><span style="letter-spacing:0.28px">350</span><span style="letter-spacing:-0.16px"> </span><span style="letter-spacing:0.03px">M</span><span style="letter-spacing:-2.40px">…</span></span>
<span class="t" style="top:184.57px;left:266.57px;letter-spacing:0.338px;">ccl4dph0fdnsg0l…</span>
<span class="t" style="top:184.57px;left:416.67px;letter-spacing:-0.453px;">192.168.0.162</span></div></section>
<section class="panel" style="left:900.02px;top:592.55px"><span class="t" style="top:5.01px;left:8.37px;letter-spacing:0.321px;-webkit-text-stroke:0.6px currentColor;">Node Top 5 Net Out</span><div class="clip" style="left:7.94px;top:-1px;width:415.68px;height:203.25px"><div class="ln" style="left:0.00px;top:68.81px;width:656.17px;height:1px"></div><div class="ln" style="left:0.00px;top:104.81px;width:656.17px;height:1px"></div><div class="ln" style="left:0.00px;top:140.81px;width:656.17px;height:1px"></div><div class="ln" style="left:0.00px;top:176.80px;width:656.17px;height:1px"></div><div class="ln" style="left:89.15px;top:69.31px;width:1px;height:144.00px"></div><div class="ln" style="left:146.15px;top:69.31px;width:1px;height:144.00px"></div><div class="ln" style="left:247.86px;top:69.31px;width:1px;height:144.00px"></div><div class="ln" style="left:397.55px;top:69.31px;width:1px;height:144.00px"></div><span class="t" style="top:44.87px;left:6.40px;"><span class="c" style="font-size:14.00px">节点实例</span></span>
<span class="t" style="top:44.87px;left:95.80px;"><span class="c" style="font-size:14.00px">设备名</span></span>
<span class="t" style="top:44.87px;left:155.35px;"><span class="c" style="font-size:14.00px">出网络流量</span></span>
<span class="t" style="top:44.87px;left:254.92px;letter-spacing:0.398px;">cluster</span>
<span class="t" style="top:44.87px;left:404.20px;letter-spacing:0.307px;">host_ip</span>
<span class="t" style="top:76.57px;left:6.40px;letter-spacing:0.350px;">cn-beiji…</span>
<span class="t" style="top:76.57px;left:95.80px;letter-spacing:0.338px;">eth1</span>
<span class="t" style="top:76.57px;left:165.18px"><span style="letter-spacing:0.28px">0</span><span style="letter-spacing:0.24px">.</span><span style="letter-spacing:0.28px">734</span><span style="letter-spacing:-0.16px"> </span><span style="letter-spacing:0.03px">M</span><span style="letter-spacing:-0.54px">B</span><span style="letter-spacing:1.24px">/</span><span style="letter-spacing:0.00px">s</span></span>
<span class="t" style="top:76.57px;left:254.92px;letter-spacing:0.338px;">ccl4dph0fdnsg0l…</span>
<span class="t" style="top:76.57px;left:404.20px;letter-spacing:-0.453px;">192.168.0.162</span>
<span class="t" style="top:112.57px;left:6.40px;letter-spacing:0.350px;">cn-beiji…</span>
<span class="t" style="top:112.57px;left:95.80px;letter-spacing:0.338px;">eth1</span>
<span class="t" style="top:112.57px;left:165.18px"><span style="letter-spacing:0.28px">0</span><span style="letter-spacing:0.24px">.</span><span style="letter-spacing:0.28px">469</span><span style="letter-spacing:-0.16px"> </span><span style="letter-spacing:0.03px">M</span><span style="letter-spacing:-0.54px">B</span><span style="letter-spacing:1.24px">/</span><span style="letter-spacing:0.00px">s</span></span>
<span class="t" style="top:112.57px;left:254.92px;letter-spacing:0.338px;">ccl4dph0fdnsg0l…</span>
<span class="t" style="top:112.57px;left:404.20px;letter-spacing:-0.453px;">192.168.0.162</span>
<span class="t" style="top:148.57px;left:6.40px;letter-spacing:0.350px;">cn-beiji…</span>
<span class="t" style="top:148.57px;left:95.80px;letter-spacing:0.360px;">cali…</span>
<span class="t" style="top:148.57px;left:165.18px"><span style="letter-spacing:0.28px">0</span><span style="letter-spacing:0.24px">.</span><span style="letter-spacing:0.28px">354</span><span style="letter-spacing:-0.16px"> </span><span style="letter-spacing:0.03px">M</span><span style="letter-spacing:-0.54px">B</span><span style="letter-spacing:1.24px">/</span><span style="letter-spacing:0.00px">s</span></span>
<span class="t" style="top:148.57px;left:254.92px;letter-spacing:0.338px;">ccl4dph0fdnsg0l…</span>
<span class="t" style="top:148.57px;left:404.20px;letter-spacing:-0.453px;">192.168.0.162</span>
<span class="t" style="top:184.57px;left:6.40px;letter-spacing:0.350px;">cn-beiji…</span>
<span class="t" style="top:184.57px;left:95.80px;letter-spacing:0.360px;">cali…</span>
<span class="t" style="top:184.57px;left:168.18px"><span style="letter-spacing:0.28px">0</span><span style="letter-spacing:0.24px">.</span><span style="letter-spacing:0.28px">3</span><span style="letter-spacing:-1.62px">4</span><span style="letter-spacing:-0.82px">1</span><span style="letter-spacing:-0.16px"> </span><span style="letter-spacing:0.03px">M</span><span style="letter-spacing:-0.54px">B</span><span style="letter-spacing:1.24px">/</span><span style="letter-spacing:0.00px">s</span></span>
<span class="t" style="top:184.57px;left:254.92px;letter-spacing:0.338px;">ccl4dph0fdnsg0l…</span>
<span class="t" style="top:184.57px;left:404.20px;letter-spacing:-0.453px;">192.168.0.162</span><div style="position:absolute;left:229.49px;top:46.87px;width:9.19px;height:16px;overflow:hidden"><svg width="14" height="14" viewBox="0 0 24 24" fill="none" stroke="rgb(204,204,220)" stroke-width="2.7" stroke-linecap="round" stroke-linejoin="round" style="position:absolute;left:1.4px;top:1px"><path d="M12 5v14M5.500 12.500L12 19l6.500-6.500"/></svg></div></div></section>
<section class="panel" style="left:1341.78px;top:592.55px"><span class="t" style="top:5.01px;left:8.37px;letter-spacing:0.292px;-webkit-text-stroke:0.6px currentColor;">Node Top 5 Disk Utilization / %</span><div class="clip" style="left:8.92px;top:-1px;width:418.31px;height:203.25px"><div class="ln" style="left:0.00px;top:68.81px;width:232.94px;height:1px"></div><div class="ln" style="left:0.00px;top:104.81px;width:232.94px;height:1px"></div><div class="ln" style="left:0.00px;top:140.81px;width:232.94px;height:1px"></div><div class="ln" style="left:0.00px;top:176.80px;width:232.94px;height:1px"></div><div class="ln" style="left:87.26px;top:69.31px;width:1px;height:144.00px"></div><div class="ln" style="left:145.50px;top:69.31px;width:1px;height:144.00px"></div><span class="t" style="top:44.87px;left:6.56px;"><span class="c" style="font-size:14.00px">节点实例</span></span>
<span class="t" style="top:44.87px;left:95.14px;"><span class="c" style="font-size:14.00px">设备名</span></span>
<span class="t" style="top:44.87px;left:153.38px;"><span class="c" style="font-size:14.00px">存储使用率</span></span>
<span class="t" style="top:76.57px;left:6.23px;letter-spacing:0.350px;">cn-beiji…</span>
<span class="t" style="top:76.57px;left:95.14px;letter-spacing:0.225px;">/de…</span>
<span class="t" style="top:76.57px;left:182.17px"><span style="letter-spacing:-0.82px">1</span><span style="letter-spacing:0.28px">4</span><span style="letter-spacing:0.24px">.</span><span style="letter-spacing:0.28px">3</span><span style="letter-spacing:0.84px"> </span><span style="letter-spacing:-1.93px;font-size:12.4px">%</span></span>
<span class="t" style="top:112.57px;left:6.23px;letter-spacing:0.350px;">cn-beiji…</span>
<span class="t" style="top:112.57px;left:95.14px;letter-spacing:0.225px;">/de…</span>
<span class="t" style="top:112.57px;left:182.17px"><span style="letter-spacing:-0.82px">1</span><span style="letter-spacing:0.28px">0</span><span style="letter-spacing:0.24px">.</span><span style="letter-spacing:0.28px">3</span><span style="letter-spacing:0.84px"> </span><span style="letter-spacing:-1.93px;font-size:12.4px">%</span></span>
<span class="t" style="top:148.57px;left:4.33px"><span style="letter-spacing:-0.82px">1</span><span style="letter-spacing:0.28px">92</span><span style="letter-spacing:-1.66px">.</span><span style="letter-spacing:-0.82px">1</span><span style="letter-spacing:0.28px">68</span><span style="letter-spacing:0.24px">.</span><span style="letter-spacing:-2.40px">…</span></span>
<span class="t" style="top:148.57px;left:95.14px;letter-spacing:0.225px;">/de…</span>
<span class="t" style="top:148.57px;left:181.08px"><span style="letter-spacing:0.28px">9</span><span style="letter-spacing:0.24px">.</span><span style="letter-spacing:0.28px">50</span><span style="letter-spacing:0.84px"> </span><span style="letter-spacing:-1.93px;font-size:12.4px">%</span></span>
<span class="t" style="top:184.57px;left:4.33px"><span style="letter-spacing:-0.82px">1</span><span style="letter-spacing:0.28px">92</span><span style="letter-spacing:-1.66px">.</span><span style="letter-spacing:-0.82px">1</span><span style="letter-spacing:0.28px">68</span><span style="letter-spacing:0.24px">.</span><span style="letter-spacing:-2.40px">…</span></span>
<span class="t" style="top:184.57px;left:95.14px;letter-spacing:0.300px;">tm…</span>
<span class="t" style="top:184.57px;left:181.08px"><span style="letter-spacing:0.28px">3</span><span style="letter-spacing:0.24px">.</span><span style="letter-spacing:0.28px">53</span><span style="letter-spacing:0.84px"> </span><span style="letter-spacing:-1.93px;font-size:12.4px">%</span></span></div></section>
</main>
<div style="position:absolute;left:0;top:0;width:1.1px;height:820px;background:rgba(0,0,0,0.35)"></div>
</div></body></html>
